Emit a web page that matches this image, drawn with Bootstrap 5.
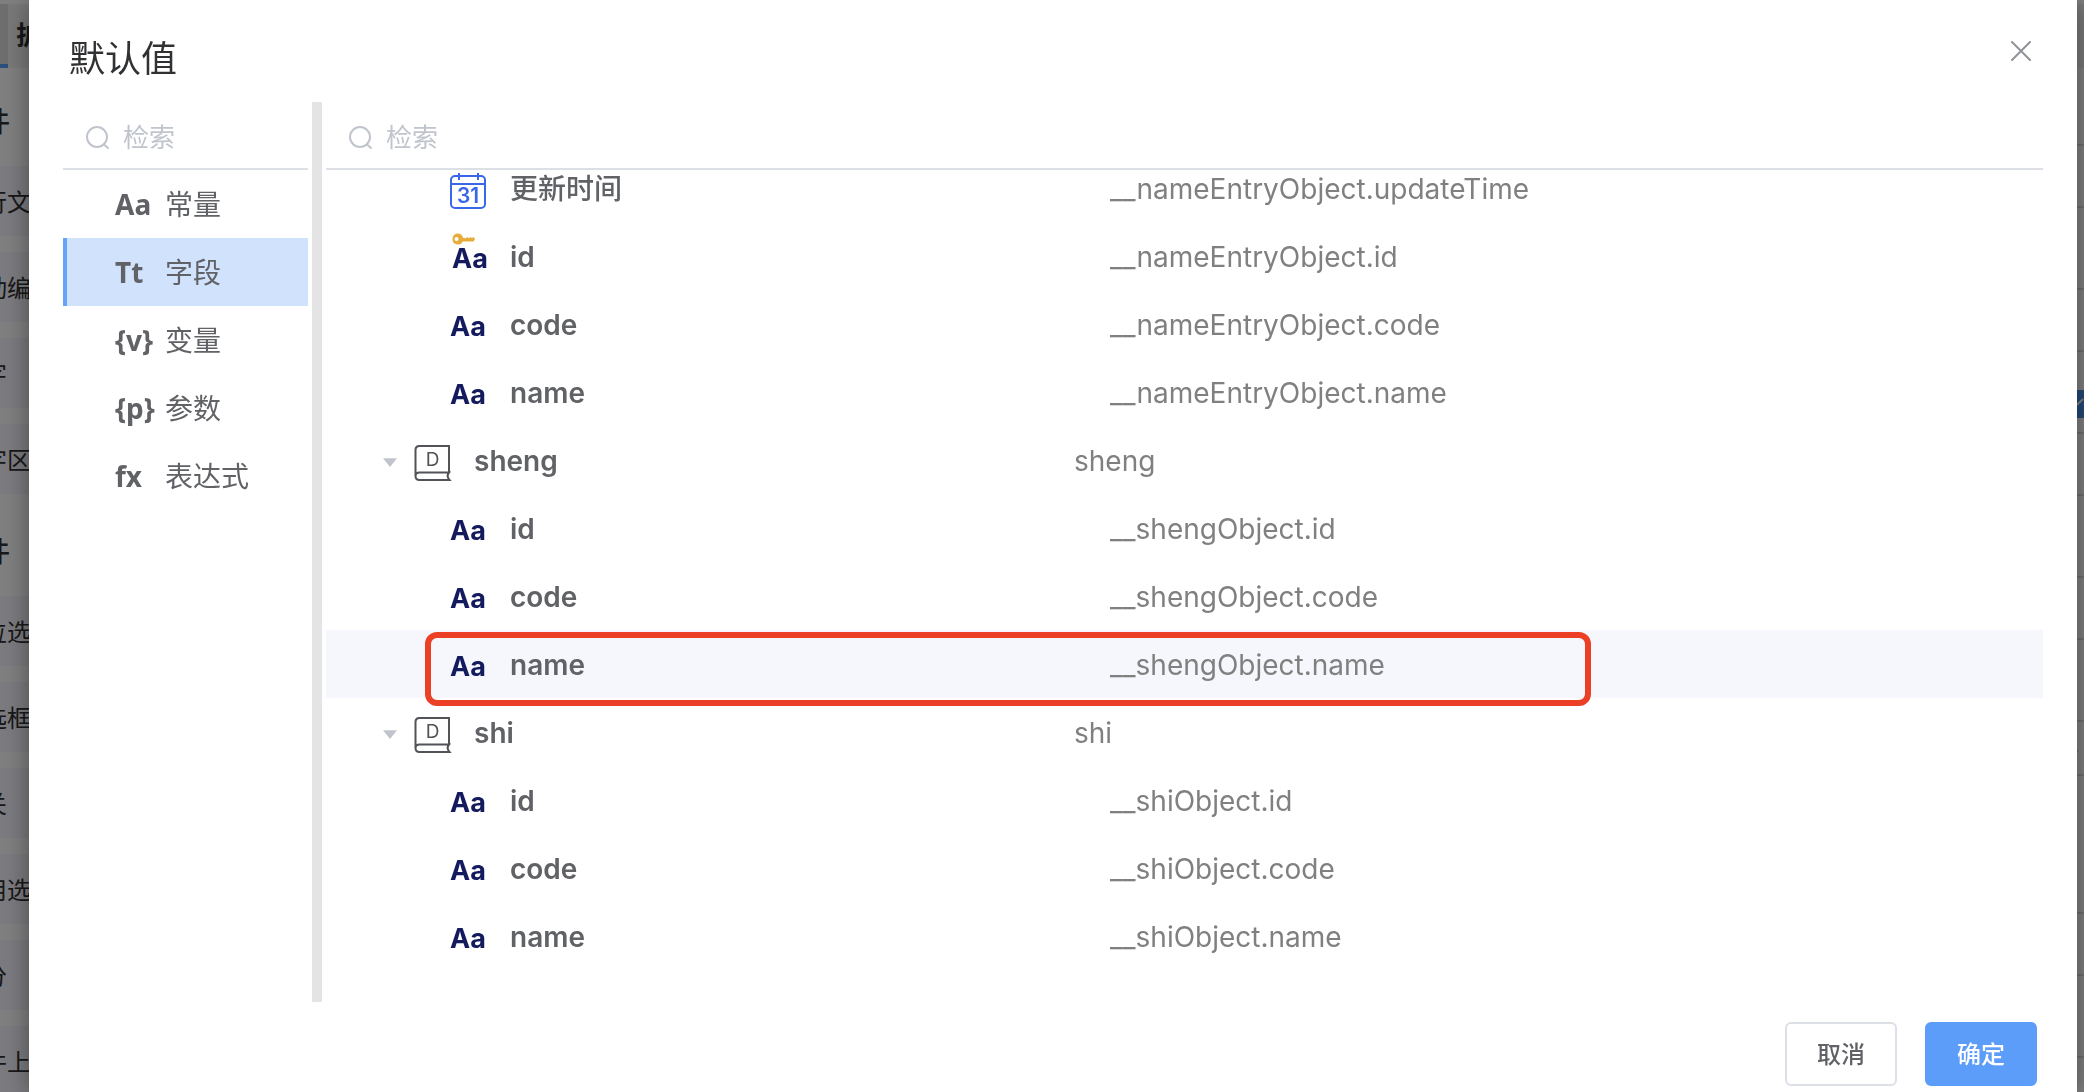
<!DOCTYPE html>
<html lang="zh-CN">
<head>
<meta charset="utf-8">
<meta name="viewport" content="width=device-width, initial-scale=1">
<title>默认值</title>
<link href="https://cdn.jsdelivr.net/npm/bootstrap@5.3.0/dist/css/bootstrap.min.css" rel="stylesheet">
<style>
  body { font-family: Inter, "Noto Sans CJK SC", sans-serif; font-size: 28px; line-height: 36px; color: #606266; height: 100vh; overflow: hidden; }

  /* designer page behind the dialog */
  .designer { height: 100vh; overflow: hidden; background: #fff; }
  .palette { width: 320px; padding-top: 4px; }
  .palette-tabs { height: 64px; background: #f2f2f2; }
  .palette-tab-on { width: 8px; background: #dcdcdc; border-bottom: 4px solid #5b9cf8; }
  .palette-tab { font-size: 26px; font-weight: 700; color: #303133; padding-left: 8px; }
  .palette-body { margin-left: -20px; }
  .palette-title { height: 98px; padding: 10px 0 0 2px; color: #303133; font-size: 28px; font-weight: 500; }
  .palette-item { height: 70px; margin-bottom: 16px; padding: 3px 0 0 3px; background: #f6f5fd; color: #303133; font-size: 24px; white-space: nowrap; }
  .palette-group { margin-bottom: -12px; }
  .props { width: 7px; background: #fff; }
  .props-head { height: 64px; margin-top: 4px; background: #f2f2f2; }
  .props-row { border-bottom: 2px solid #dcdfe6; overflow: hidden; }
  .props-sm { height: 62px; }
  .props-md { height: 82px; }
  .props-lg { height: 78px; }
  .props-xl { height: 138px; }
  .props-sh { height: 54px; }
  .props-check { width: 28px; height: 28px; background: #4a90f0; }
  .props-num { font-size: 24px; font-weight: 600; margin-left: -14px; color: #303133; }
  .shade { background: rgba(0, 0, 0, .5); }

  /* dialog */
  .dialog-panel { inset: 0 7px 0 29px; background: #fff; box-shadow: 0 2px 24px rgba(0, 0, 0, .4); }
  .dialog-head { height: 102px; padding: 14px 42px 0 40px; }
  .dialog-title { font-size: 36px; line-height: 90px; color: #303133; font-weight: 400; }
  .close-btn { width: 28px; height: 28px; margin-top: 23px; }
  .dialog-main { padding: 0 34px; gap: 4px; }
  .side-pane { width: 245px; }
  .splitter { width: 10px; background: #e4e4e4; }
  .search-box { height: 68px; padding: 6px 0 0 23px; border-bottom: 2px solid #dcdfe6; gap: 13px; }
  .search-box input { font-size: 26px; line-height: 36px; color: #606266; }
  .search-box input::placeholder { color: #c0c4cc; opacity: 1; }

  .kind-link { height: 68px; padding: 2px 0 0 48px; border-left: 4px solid transparent; color: #606266; }
  .kind-link.active { background: #d1e2fd; border-left-color: #66a3fa; }
  .kind-sign { width: 50px; font-family: "Noto Sans", sans-serif; font-weight: 700; line-height: 34px; padding-bottom: 2px; }

  .tree-view { overflow: hidden; }
  .tree-root { margin-top: -16px; }
  .tree-row { height: 68px; padding: 2px 0 0 50px; }
  .tree-child { padding-left: 124px; }
  .tree-row.current { background: #f5f7fc; }
  .caret-btn { width: 38px; height: 36px; padding: 2px 0 0 7px; }
  .node-name { width: 660px; gap: 23px; font-weight: 600; }
  .node-label-cjk { font-weight: 500; }
  .node-icon { width: 37px; height: 36px; overflow: visible; }
  symbol { overflow: visible; }
  .node-path { color: #808080; }
  .sign-aa { font-family: Inter, sans-serif; font-weight: 700; font-size: 27px; fill: #131a5e; }
  .focus-frame { top: 2px; left: 99px; right: 452px; height: 74px; border: 6px solid #eb4026; border-radius: 12px; }

  .dialog-foot { padding: 20px 40px 6px; gap: 28px; }
  .dialog-foot .btn { width: 112px; height: 64px; font-size: 24px; font-weight: 500; border-radius: 6px; border-width: 2px; padding: 2px 0 0; }
  .btn-plain { background: #fff; border-color: #dcdfe6; color: #606266; }
  .btn-main { background: #5c9df9; border-color: #5c9df9; color: #fff; }
</style>
</head>
<body>
<svg class="d-none" aria-hidden="true">
  <symbol id="i-search" viewBox="0 0 24 24"><circle cx="11" cy="11" r="10" fill="none" stroke="#c0c4cc" stroke-width="2"/><path d="M18 18.500L22 22" stroke="#c0c4cc" stroke-width="2" stroke-linecap="round"/></symbol>
  <symbol id="i-aa" viewBox="0 0 37 36" overflow="visible"><text class="sign-aa" x="0" y="29">Aa</text></symbol>
  <symbol id="i-key" viewBox="0 0 37 36" overflow="visible"><text class="sign-aa" x="2" y="29">Aa</text><path fill="#e6ad3c" fill-rule="evenodd" d="M8-5.500a5.500 5.500 0 1 0 4.900 8H23.500l1.500-2.500-1.500-2-1.500 1-1.500-1-1.500 1.200-1.500-1.200-1.500 1.200-3-.5A5.500 5.500 0 0 0 8-5.500zM6.500-2a2 2 0 1 1 0 4 2 2 0 0 1 0-4z"/></symbol>
  <symbol id="i-date" viewBox="0 0 37 36" overflow="visible"><g fill="none" stroke="#3a66ea" stroke-width="2"><rect x="1" y="3" width="34" height="32" rx="4"/><path d="M1 11H35M9 0V7M28 0V7"/></g><text x="18" y="30" text-anchor="middle" font-family="Inter, sans-serif" font-size="21" font-weight="600" fill="#3a66ea">31</text></symbol>
  <symbol id="i-book" viewBox="0 0 37 36" overflow="visible"><g fill="none" stroke="#515356" stroke-width="2"><path d="M35 27.500V1H5.500Q1.500 1 1.500 5V31Q1.500 35 5.500 35H35.500Q32 31 35 27.500H5.500Q1.500 27.500 1.500 31"/></g><text x="18.500" y="21" text-anchor="middle" font-family="Inter, sans-serif" font-size="19" font-weight="400" fill="#515356">D</text></symbol>
  <symbol id="i-caret" viewBox="0 0 16 10"><path d="M0 0H16L8 10z" fill="#c0c4cc"/></symbol>
</svg>

<div class="designer d-flex justify-content-between">
  <aside class="palette">
    <div class="palette-tabs d-flex">
      <div class="palette-tab-on"></div>
      <div class="palette-tab d-flex align-items-center">扩</div>
    </div>
    <div class="palette-body">
      <div class="palette-title d-flex align-items-center">件</div>
      <div class="palette-group">
        <div class="palette-item d-flex align-items-center">行文</div>
        <div class="palette-item d-flex align-items-center">动编</div>
        <div class="palette-item d-flex align-items-center">字</div>
        <div class="palette-item d-flex align-items-center">字区</div>
      </div>
      <div class="palette-title d-flex align-items-center">件</div>
      <div class="palette-group">
        <div class="palette-item d-flex align-items-center">位选</div>
        <div class="palette-item d-flex align-items-center">选框</div>
        <div class="palette-item d-flex align-items-center">关</div>
        <div class="palette-item d-flex align-items-center">用选</div>
        <div class="palette-item d-flex align-items-center">分</div>
        <div class="palette-item d-flex align-items-center">件上</div>
      </div>
    </div>
  </aside>
  <aside class="props overflow-hidden">
    <div class="props-head"></div>
    <div class="props-row props-lg"></div>
    <div class="props-row props-sm"></div>
    <div class="props-row props-md"></div>
    <div class="props-row props-sm"></div>
    <div class="props-row props-md d-flex align-items-center pt-4"><svg class="props-check flex-shrink-0" viewBox="0 0 28 28"><path d="M0 15L6 9" stroke="#fff" stroke-width="2"/></svg></div>
    <div class="props-row props-sm"></div>
    <div class="props-row props-md"></div>
    <div class="props-row props-sm"></div>
    <div class="props-row props-md"></div>
    <div class="props-row props-sh d-flex align-items-center"><span class="props-num">8</span></div>
    <div class="props-row props-xl"></div>
    <div class="props-row props-sm"></div>
    <div class="props-row props-md"></div>
  </aside>
</div>
<div class="shade position-fixed top-0 start-0 w-100 h-100"></div>

<div class="dialog-panel position-fixed d-flex flex-column" role="dialog" aria-labelledby="dialogTitle">
  <header class="dialog-head d-flex justify-content-between align-items-start">
    <h1 class="dialog-title m-0" id="dialogTitle">默认值</h1>
    <button type="button" class="close-btn btn border-0 p-0 d-flex align-items-center justify-content-center" aria-label="关闭"><svg width="20" height="20" viewBox="0 0 20 20"><path d="M1 1L19 19M19 1L1 19" stroke="#909399" stroke-width="2" stroke-linecap="round"/></svg></button>
  </header>

  <div class="dialog-main d-flex flex-grow-1 overflow-hidden">
    <nav class="side-pane flex-shrink-0">
      <label class="search-box d-flex align-items-center">
        <svg class="flex-shrink-0" width="24" height="24"><use href="#i-search"/></svg>
        <input type="text" class="form-control border-0 p-0 shadow-none bg-transparent" placeholder="检索" aria-label="检索类型">
      </label>
      <a href="#" class="kind-link d-flex align-items-center text-decoration-none"><span class="kind-sign">Aa</span>常量</a>
      <a href="#" class="kind-link active d-flex align-items-center text-decoration-none"><span class="kind-sign">Tt</span>字段</a>
      <a href="#" class="kind-link d-flex align-items-center text-decoration-none"><span class="kind-sign">{v}</span>变量</a>
      <a href="#" class="kind-link d-flex align-items-center text-decoration-none"><span class="kind-sign">{p}</span>参数</a>
      <a href="#" class="kind-link d-flex align-items-center text-decoration-none"><span class="kind-sign">fx</span>表达式</a>
    </nav>
    <div class="splitter flex-shrink-0"></div>
    <section class="d-flex flex-column flex-grow-1">
      <label class="search-box d-flex align-items-center flex-shrink-0">
        <svg class="flex-shrink-0" width="24" height="24"><use href="#i-search"/></svg>
        <input type="text" class="form-control border-0 p-0 shadow-none bg-transparent" placeholder="检索" aria-label="检索字段">
      </label>
      <div class="tree-view flex-grow-1">
        <ul class="tree-root list-unstyled mb-0">
          <li class="tree-row tree-child d-flex align-items-center"><div class="node-name d-flex align-items-center"><svg class="node-icon mt-1"><use href="#i-date"/></svg><span class="node-label-cjk">更新时间</span></div><span class="node-path">__nameEntryObject.updateTime</span></li>
          <li class="tree-row tree-child d-flex align-items-center"><div class="node-name d-flex align-items-center"><svg class="node-icon"><use href="#i-key"/></svg>id</div><span class="node-path">__nameEntryObject.id</span></li>
          <li class="tree-row tree-child d-flex align-items-center"><div class="node-name d-flex align-items-center"><svg class="node-icon"><use href="#i-aa"/></svg>code</div><span class="node-path">__nameEntryObject.code</span></li>
          <li class="tree-row tree-child d-flex align-items-center"><div class="node-name d-flex align-items-center"><svg class="node-icon"><use href="#i-aa"/></svg>name</div><span class="node-path">__nameEntryObject.name</span></li>
          <li class="tree-row d-flex align-items-center"><button type="button" class="caret-btn btn border-0 d-flex align-items-center" aria-label="收起 sheng"><svg width="14" height="9"><use href="#i-caret"/></svg></button><div class="node-name d-flex align-items-center"><svg class="node-icon mt-1"><use href="#i-book"/></svg>sheng</div><span class="node-path">sheng</span></li>
          <li class="tree-row tree-child d-flex align-items-center"><div class="node-name d-flex align-items-center"><svg class="node-icon"><use href="#i-aa"/></svg>id</div><span class="node-path">__shengObject.id</span></li>
          <li class="tree-row tree-child d-flex align-items-center"><div class="node-name d-flex align-items-center"><svg class="node-icon"><use href="#i-aa"/></svg>code</div><span class="node-path">__shengObject.code</span></li>
          <li class="tree-row tree-child current position-relative d-flex align-items-center"><div class="node-name d-flex align-items-center"><svg class="node-icon"><use href="#i-aa"/></svg>name</div><span class="node-path">__shengObject.name</span><div class="focus-frame position-absolute"></div></li>
          <li class="tree-row d-flex align-items-center"><button type="button" class="caret-btn btn border-0 d-flex align-items-center" aria-label="收起 shi"><svg width="14" height="9"><use href="#i-caret"/></svg></button><div class="node-name d-flex align-items-center"><svg class="node-icon mt-1"><use href="#i-book"/></svg>shi</div><span class="node-path">shi</span></li>
          <li class="tree-row tree-child d-flex align-items-center"><div class="node-name d-flex align-items-center"><svg class="node-icon"><use href="#i-aa"/></svg>id</div><span class="node-path">__shiObject.id</span></li>
          <li class="tree-row tree-child d-flex align-items-center"><div class="node-name d-flex align-items-center"><svg class="node-icon"><use href="#i-aa"/></svg>code</div><span class="node-path">__shiObject.code</span></li>
          <li class="tree-row tree-child d-flex align-items-center"><div class="node-name d-flex align-items-center"><svg class="node-icon"><use href="#i-aa"/></svg>name</div><span class="node-path">__shiObject.name</span></li>
        </ul>
      </div>
    </section>
  </div>

  <footer class="dialog-foot d-flex justify-content-end">
    <button type="button" class="btn btn-plain">取消</button>
    <button type="button" class="btn btn-main">确定</button>
  </footer>
</div>
<script src="https://cdn.jsdelivr.net/npm/bootstrap@5.3.0/dist/js/bootstrap.bundle.min.js"></script>
</body>
</html>
